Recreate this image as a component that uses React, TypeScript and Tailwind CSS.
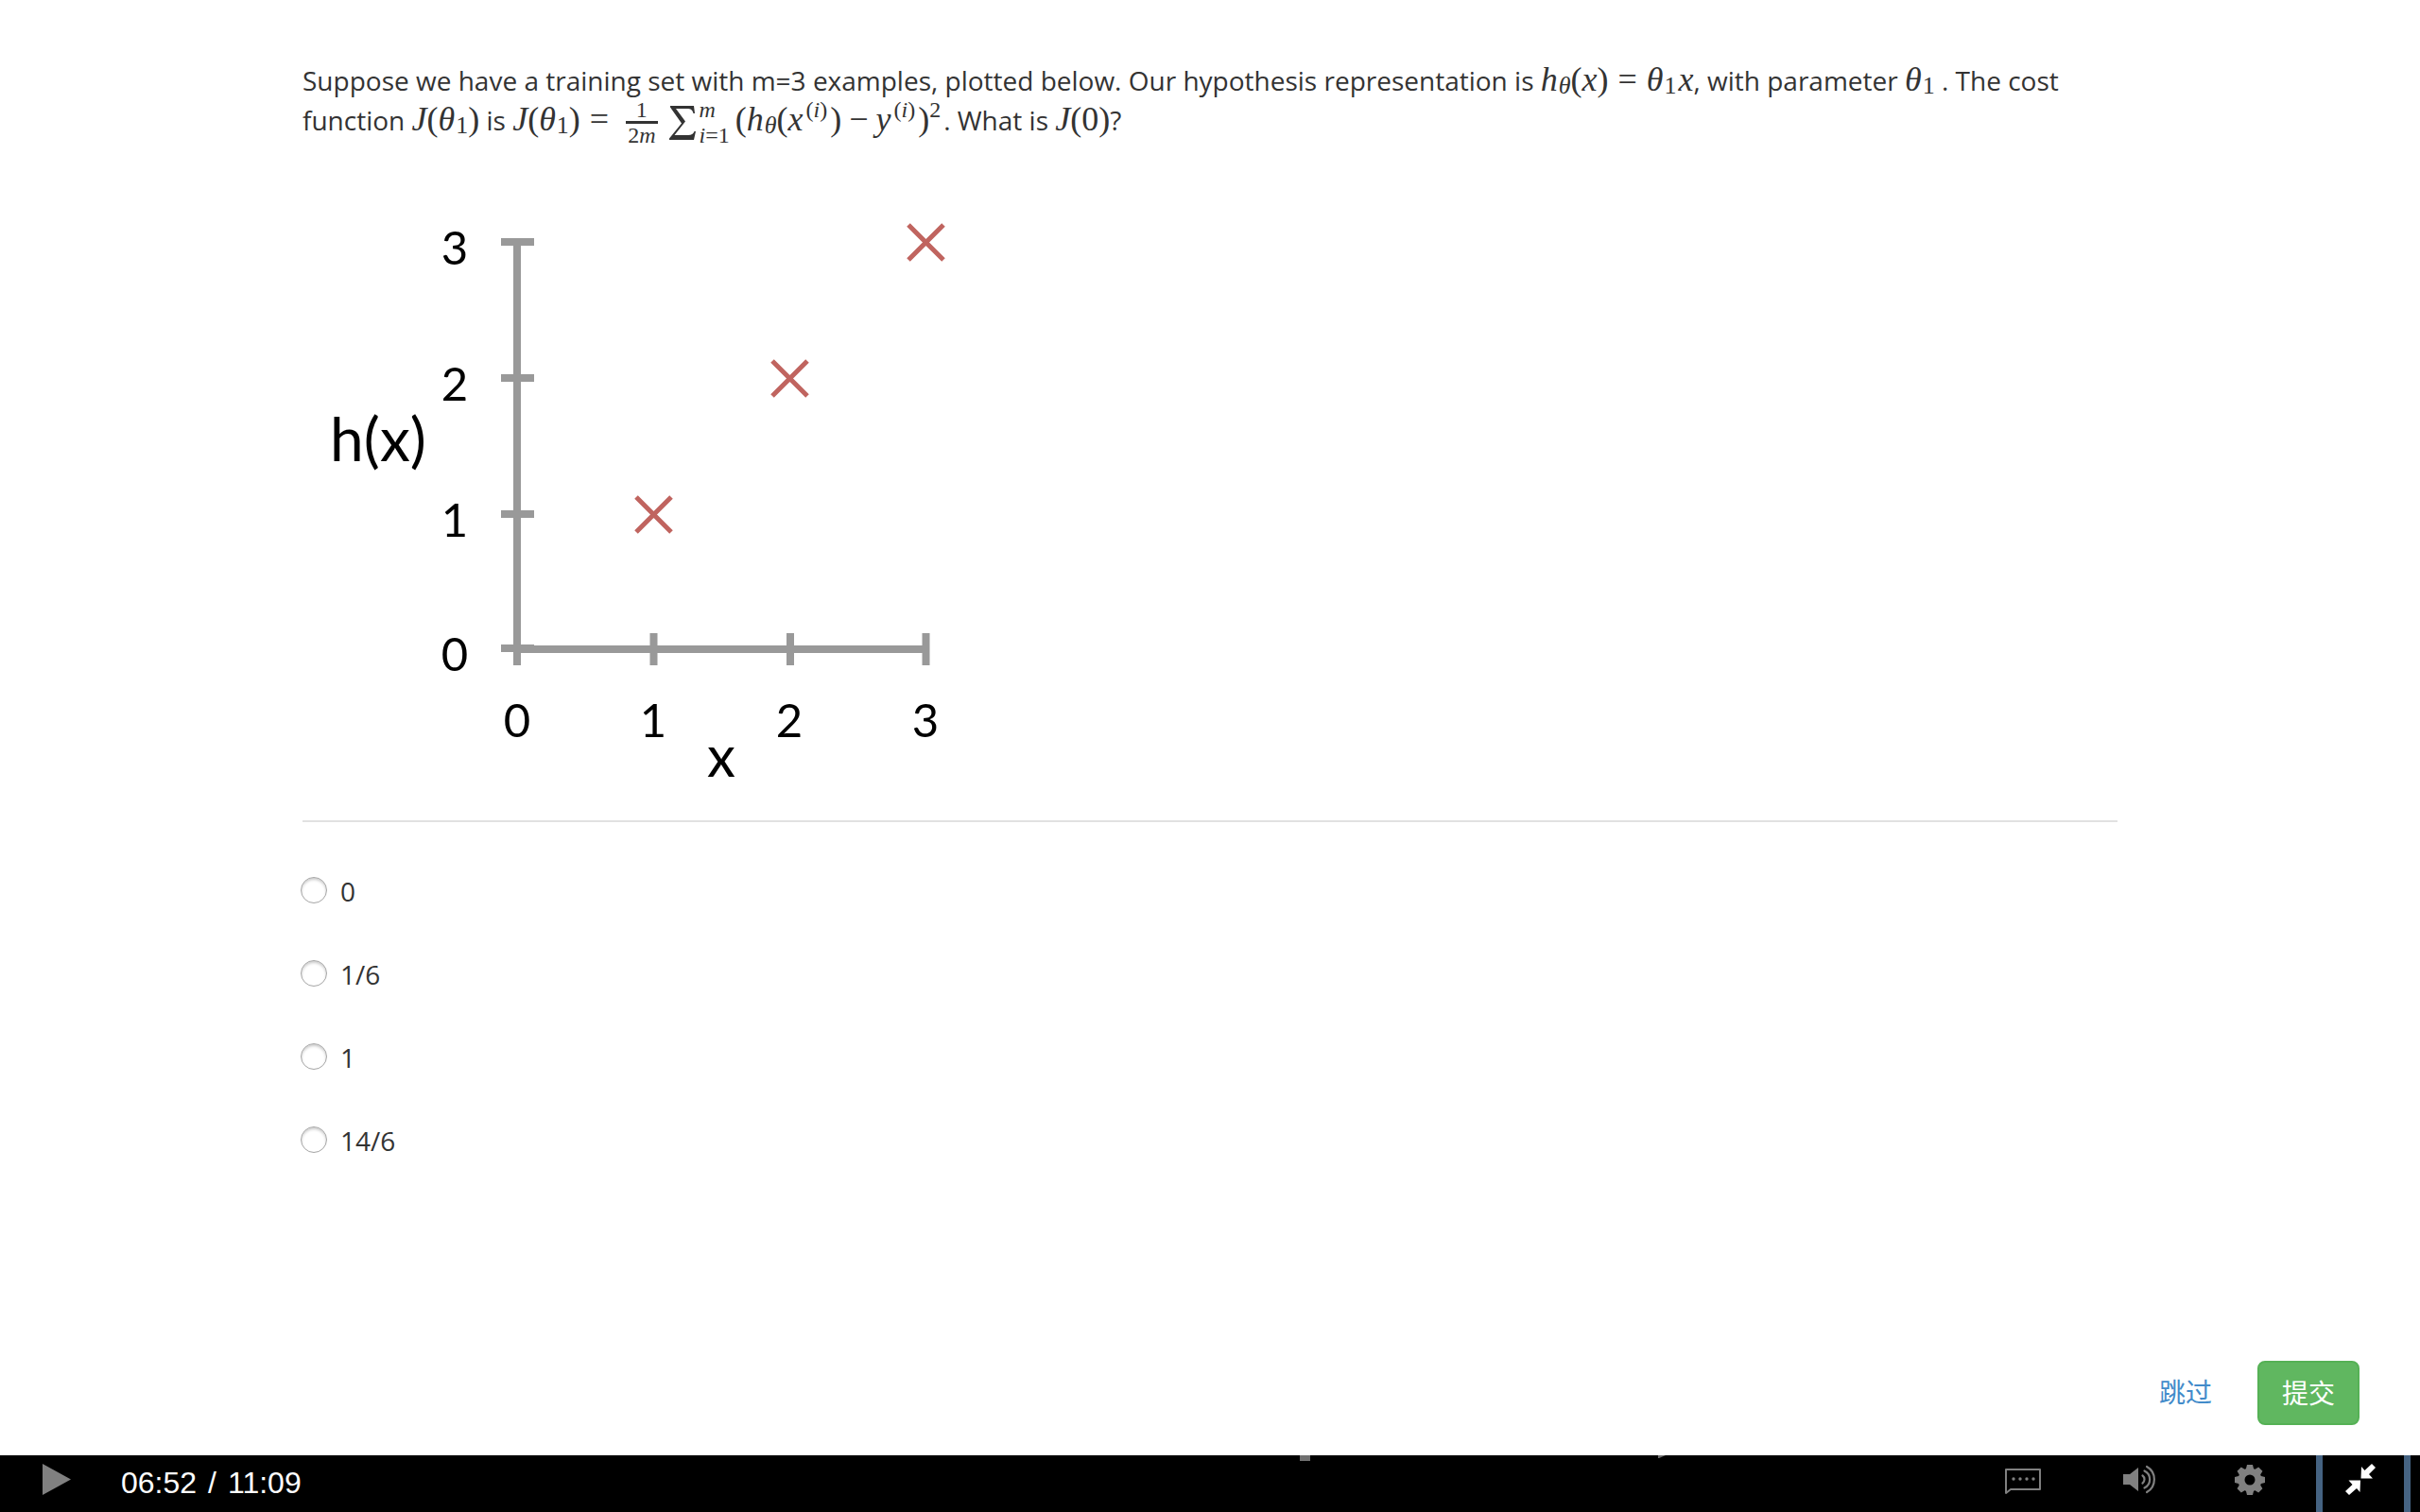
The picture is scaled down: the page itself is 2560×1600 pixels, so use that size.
import type { ReactNode } from "react";

const xTicks = [0, 1, 2, 3];
const options = ["0", "1/6", "1", "14/6"];

function Formula({ children }: { children: ReactNode }) {
  return (
    <span className="whitespace-nowrap font-['Liberation_Serif',serif] text-4xl leading-none">
      {children}
    </span>
  );
}

function Sub({ children }: { children: ReactNode }) {
  return <sub className="bottom-[-3px] ml-px text-[26px] leading-none">{children}</sub>;
}

function Sup({ children }: { children: ReactNode }) {
  return <sup className="top-[-14px] mx-[3px] text-2xl leading-none">{children}</sup>;
}

function Question() {
  return (
    <p>
      Suppose we have a training set with m=3 examples, plotted below. Our hypothesis representation is{" "}
      <Formula>
        <i>h</i>
        <Sub>
          <i>θ</i>
        </Sub>
        (<i>x</i>)<span className="mx-2.5">=</span>
        <i>θ</i>
        <Sub>1</Sub>
        <i className="ml-0.5">x</i>
      </Formula>
      , with parameter{" "}
      <Formula>
        <i>θ</i>
        <Sub>1</Sub>
      </Formula>{" "}
      . The cost{" "}
      {"function"}{" "}
      <Formula>
        <i>J</i>(<i>θ</i>
        <Sub>1</Sub>)
      </Formula>{" "}
      is{" "}
      <Formula>
        <i>J</i>(<i>θ</i>
        <Sub>1</Sub>)<span className="mx-2.5">=</span>
        <span className="-my-4 mr-1 ml-2 inline-flex flex-col items-stretch text-center align-middle text-2xl leading-6">
          <span className="border-b-3 border-[#333]">1</span>
          <span className="px-0.5">
            2<i>m</i>
          </span>
        </span>
        <span className="-my-4 ml-2 inline-flex items-center align-middle">
          <svg className="h-9 w-7" viewBox="0 0 28 36" fill="#333" aria-label="sum" role="img">
            <path d="M1 0H26L27 8H25.500C24.500 4 22.500 3 19 3H7L17 16.500L5.500 31H20C23.500 31 25.500 29.500 26.500 27H28L26 36H0V34.500L13 18.500L1 1.500Z" />
          </svg>
          <span className="ml-1 flex flex-col text-2xl leading-[27px]">
            <i>m</i>
            <span>
              <i>i</i>=1
            </span>
          </span>
        </span>
        <span className="ml-1.5">(</span>
        <i>h</i>
        <Sub>
          <i>θ</i>
        </Sub>
        (<i>x</i>
        <Sup>
          (<i>i</i>)
        </Sup>
        )<span className="mx-2">−</span>
        <i>y</i>
        <Sup>
          (<i>i</i>)
        </Sup>
        )<sup className="top-[-14px] mr-[3px] text-2xl leading-none">2</sup>
      </Formula>
      . What is{" "}
      <Formula>
        <i>J</i>(0)
      </Formula>
      ?
    </p>
  );
}

function Plot() {
  return (
    <svg
      className="block h-[680px] w-[700px] font-['Lato',sans-serif]"
      viewBox="0 0 700 680"
      role="img"
      aria-label="Training examples"
    >
      <g stroke="#999" strokeWidth="8" fill="none">
        <path d="M227 68V516M227 499H660" />
        <path d="M210 68H245M210 212H245M210 356H245M210 498H245" />
        <path d="M371.500 482V516M516 482V516M659.500 482V516" />
      </g>
      <g stroke="#c0645f" strokeWidth="5" strokeLinecap="butt">
        {[1, 2, 3].map((v) => (
          <path
            key={v}
            d="M-18.500 -18.500L18.500 18.500M18.500 -18.500L-18.500 18.500"
            transform={`translate(${227.5 + v * 144} ${500.5 - v * 144})`}
          />
        ))}
      </g>
      <g fill="#000" textAnchor="middle" fontSize="49">
        <text x="161" y="92">3</text>
        <text x="161" y="236">2</text>
        <text x="161" y="380">1</text>
        <text x="161" y="522">0</text>
        {xTicks.map((v) => (
          <text key={v} x={227 + v * 144} y="592">
            {v}
          </text>
        ))}
        <text x="80" y="300" fontSize="64">h(x)</text>
        <text x="443" y="634" fontSize="60">x</text>
      </g>
    </svg>
  );
}

function PlayerBar() {
  const side = "flex h-full w-[120px] items-start justify-center pt-2";
  return (
    <footer className="relative flex h-15 items-stretch overflow-hidden bg-black text-white">
      <span className="absolute top-0 left-[53.700%] h-1.5 w-[11px] bg-[#707070]" />
      <svg className="absolute top-0 left-[68.500%] h-[3px] w-2" viewBox="0 0 8 3" fill="#707070">
        <path d="M0 0H8L1 3H0Z" />
      </svg>
      <button className="flex items-start pt-[9px] pl-[45px]" aria-label="Play">
        <svg className="h-[33px] w-[30px]" viewBox="0 0 30 33" fill="#808080">
          <path d="M0 0L30 16.500L0 33Z" />
        </svg>
      </button>
      <div className="ml-[53px] pt-1 font-['Liberation_Sans',sans-serif] text-[32px] leading-[50px] whitespace-pre">
        06:52<span className="mx-3">/</span>11:09
      </div>
      <div className="ml-auto flex">
        <button className={side} aria-label="Subtitles">
          <svg className="h-[34px] w-10" viewBox="0 0 40 34" fill="none" stroke="#808080" strokeWidth="2">
            <path d="M2 7H38V28H7L2 32Z" strokeLinejoin="round" />
            <g fill="#808080" stroke="none">
              <circle cx="10" cy="17" r="1.700" />
              <circle cx="17" cy="17" r="1.700" />
              <circle cx="24" cy="17" r="1.700" />
              <circle cx="31" cy="17" r="1.700" />
            </g>
          </svg>
        </button>
        <button className={side} aria-label="Volume">
          <svg className="h-[34px] w-10" viewBox="0 0 40 34" fill="none" stroke="#808080" strokeWidth="2.200" strokeLinecap="round">
            <path d="M6 12H13L22 5V30L13 23H6Z" fill="#808080" stroke="none" />
            <path d="M26.500 13.500A5 5 0 0 1 26.500 21.500M28.500 8.500A10 10 0 0 1 28.500 26.500M31 4A15.500 15.500 0 0 1 31 31" />
          </svg>
        </button>
        <button className={side} aria-label="Settings">
          <svg className="h-[34px] w-[34px]" viewBox="-17 -18 34 34">
            <g fill="#808080">
              <circle r="12.500" />
              {[0, 45, 90, 135].map((a) => (
                <path key={a} d="M-3 -16H3L4.500 -10V10L3 16H-3L-4.500 10V-10Z" transform={`rotate(${a})`} />
              ))}
            </g>
            <circle r="5.500" fill="#000" />
          </svg>
        </button>
        <button
          className="mr-2.5 ml-2.5 flex w-[100px] items-start justify-center border-x-[7px] border-[#456382] pt-[9px] pr-1.5"
          aria-label="Exit full screen"
        >
          <svg className="h-[33px] w-8" viewBox="0 0 32 33" fill="#fff">
            <path d="M17 3L20.500 7L28 0L32 4L25 11L29 15.500H16.500Z" />
            <path d="M15.500 30L12 26L4 33L0 29L7.500 22L3.500 17.500H16Z" />
          </svg>
        </button>
      </div>
    </footer>
  );
}

export default function App() {
  return (
    <div className="flex min-h-screen flex-col bg-white font-['Open_Sans','Noto_Sans_CJK_SC',sans-serif] text-[28px] leading-[42px] text-[#333]">
      <main className="mx-auto w-3/4 pt-16">
        <Question />
        <div className="mt-10 border-b-2 border-[#e1e1e1]">
          <Plot />
        </div>
        <fieldset className="mt-[52px] flex flex-col items-start gap-[46px]">
          {options.map((o) => (
            <label key={o} className="-ml-0.5 flex items-center gap-3.5">
              <input
                type="radio"
                name="answer"
                value={o}
                className="mb-0.5 size-7 appearance-none rounded-full border border-[#a6a6a6] bg-white shadow-[inset_0_2px_3px_#ccc] checked:bg-[#428bca]"
              />
              {o}
            </label>
          ))}
        </fieldset>
      </main>
      <div className="mt-auto flex items-center justify-end gap-6 pr-16 pb-8">
        <button className="px-6 pt-3 pb-3.5 text-[#428bca]">跳过</button>
        <button className="rounded-lg border-2 border-[#55b155] bg-[#60b760] px-6 py-[11px] text-white">提交</button>
      </div>
      <PlayerBar />
    </div>
  );
}
